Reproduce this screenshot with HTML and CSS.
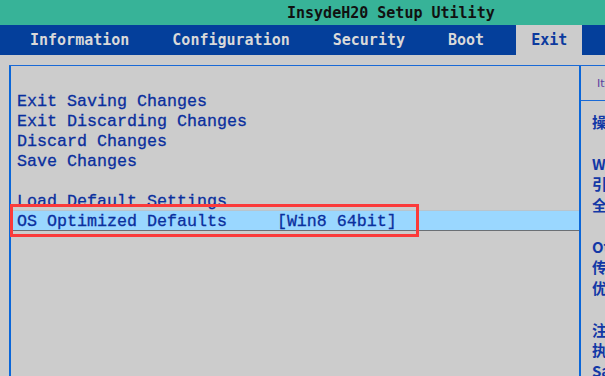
FILE: index.html
```html
<!DOCTYPE html>
<html lang="zh">
<head>
    <meta charset="UTF-8">
    <meta name="viewport" content="width=device-width, initial-scale=1.0">
    <title>InsydeH20 Setup Utility</title>
    <link rel="stylesheet" href="styles.css">
</head>
<body>
    <div class="titre">InsydeH20 Setup Utility</div>
    <div class="onglets">
        <span class="onglet">Information</span>
        <span class="onglet">Configuration</span>
        <span class="onglet">Security</span>
        <span class="onglet">Boot</span>
        <span class="onglet actif">Exit</span>
    </div>

    <div class="ecran">
        <div class="menu">
            <div class="ligne">Exit Saving Changes</div>
            <div class="ligne">Exit Discarding Changes</div>
            <div class="ligne">Discard Changes</div>
            <div class="ligne">Save Changes</div>
            <div class="ligne"></div>
            <div class="ligne">Load Default Settings</div>
            <div class="ligne choisie">OS Optimized Defaults     [Win8 64bit]</div>
        </div>
        <div class="aide">
            <div class="aide-titre">Item Specific Help</div>
            <div class="aide-texte">
                <p>操作系统优化默认值</p>
                <p>Win8 64bit：<br>引导 Win8 64bit 系统<br>全部使用 UEFI 模式</p>
                <p>Other OS：<br>传统模式启动<br>优先兼容旧系统</p>
                <p>注意：<br>执行后请保存<br>Save Changes</p>
            </div>
        </div>
        <!-- cadre rouge d'annotation -->
        <div class="cadre"></div>
    </div>
</body>
</html>
```

FILE: styles.css
```css
body {
    margin: 0;
    width: 605px;
    height: 376px;
    overflow: hidden;
    background-color: #cccccc;
}

.titre {
    height: 25px;
    background-color: #37b398;
    color: #111;
    font-family: "DejaVu Sans Mono", monospace;
    font-weight: bold;
    font-size: 15px;
    line-height: 26px;
    padding-left: 287px;
    white-space: nowrap;
}

.onglets {
    height: 30px;
    background-color: #043f9b;
    display: flex;
    padding-left: 15px;
    gap: 13px;
    font-family: "DejaVu Sans Mono", monospace;
    font-weight: bold;
    font-size: 15px;
    line-height: 30px;
    white-space: nowrap;
}

.onglet {
    color: #d9d9d9;
    padding: 0 15px;
}

.onglet.actif {
    margin-left: 4px;
    background-color: #cccccc;
    color: #0b3a9e;
}

.ecran {
    position: relative;
    display: flex;
    margin: 10px 0 0 9px;
    height: 310px;
    border-top: 1px solid #1a6ad6;
}

.menu {
    width: 568px;
    border-left: 2px solid #0a66d8;
    padding-top: 26px;
    font-family: "Liberation Mono", monospace;
    font-size: 16.67px;
    line-height: 20px;
    color: #0a2f9e;
}

.ligne {
    height: 20px;
    padding-left: 6px;
    white-space: pre;
    -webkit-text-stroke: 0.3px #0a2f9e;
}

.ligne.choisie {
    height: 19px;
    margin-top: -2px;
    background-color: #9ad7ff;
    border-top: 1px solid #b9c4cc;
    border-bottom: 1px solid #6b6f74;
    line-height: 21px;
}

.aide {
    flex: 1;
    border-left: 2px solid #0a66d8;
    overflow: hidden;
}

.aide-titre {
    height: 34px;
    border-bottom: 1px solid #1a6ad6;
    padding-left: 16px;
    font-family: "DejaVu Sans", sans-serif;
    font-size: 11px;
    line-height: 36px;
    color: #5b3d9e;
    white-space: nowrap;
}

.aide-texte {
    padding: 11px 0 0 11px;
    font-family: "Noto Sans CJK SC", "Noto Sans", sans-serif;
    font-weight: bold;
    font-size: 15px;
    line-height: 20.75px;
    color: #1238a6;
    white-space: nowrap;
}

.aide-texte p {
    margin: 0 0 20.75px 0;
}

.cadre {
    position: absolute;
    left: 1px;
    top: 138px;
    width: 403px;
    height: 27px;
    border: 3px solid #fb3a3a;
}
```
